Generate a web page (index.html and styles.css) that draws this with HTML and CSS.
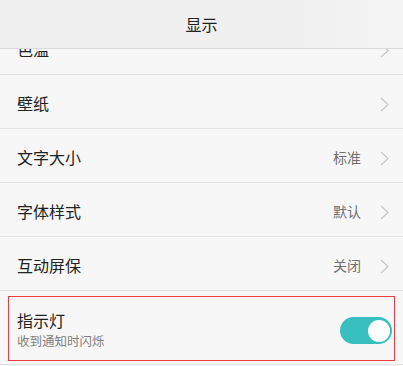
FILE: index.html
```html
<!DOCTYPE html>
<html lang="zh-CN">
<head>
  <meta charset="UTF-8">
  <meta name="viewport" content="width=device-width, initial-scale=1.0">
  <title>显示</title>
  <link rel="stylesheet" href="styles.css">
</head>
<body>

  <div class="header">显示</div>

  <div class="viewport">
    <div class="list">
      <div class="row">
        <span class="label">色温</span>
        <span class="arrow"><svg width="9" height="15" viewBox="0 0 9 15"><polyline points="1,1 8,7.5 1,14" /></svg></span>
      </div>
      <div class="row">
        <span class="label">壁纸</span>
        <span class="arrow"><svg width="9" height="15" viewBox="0 0 9 15"><polyline points="1,1 8,7.5 1,14" /></svg></span>
      </div>
      <div class="row">
        <span class="label">文字大小</span>
        <span class="value">标准</span>
        <span class="arrow"><svg width="9" height="15" viewBox="0 0 9 15"><polyline points="1,1 8,7.5 1,14" /></svg></span>
      </div>
      <div class="row">
        <span class="label">字体样式</span>
        <span class="value">默认</span>
        <span class="arrow"><svg width="9" height="15" viewBox="0 0 9 15"><polyline points="1,1 8,7.5 1,14" /></svg></span>
      </div>
      <div class="row">
        <span class="label">互动屏保</span>
        <span class="value">关闭</span>
        <span class="arrow"><svg width="9" height="15" viewBox="0 0 9 15"><polyline points="1,1 8,7.5 1,14" /></svg></span>
      </div>
      <div class="row row-marked">
        <div class="marked">
          <div class="text">
            <div class="label">指示灯</div>
            <div class="sub">收到通知时闪烁</div>
          </div>
          <div class="switch on"><div class="knob"></div></div>
        </div>
      </div>
    </div>
  </div>

</body>
</html>
```

FILE: styles.css
```css
body {
  margin: 0;
  width: 403px;
  height: 366px;
  display: flex;
  flex-direction: column;
  overflow: hidden;
  background-color: #f7f7f7;
  font-family: "Noto Sans CJK SC", "Noto Sans", sans-serif;
  color: #222;
}
.header {
  height: 48px;
  flex-shrink: 0;
  display: flex;
  justify-content: center;
  align-items: center;
  font-size: 16px;
  color: #222;
  background: linear-gradient(90deg, #efefef, #f0f0f0 70%, #f3f3f3);
  border-bottom: 1px solid #d9d9d9;
}
.viewport {
  flex: 1;
  overflow: hidden;
}
.list {
  margin-top: -28px;
}
.row {
  height: 53px;
  display: flex;
  align-items: center;
  padding: 0 14px 0 17px;
  border-bottom: 1px solid #e3e3e3;
}
.label {
  flex: 1;
  font-size: 16px;
  color: #222;
  padding-top: 3px;
}
.value {
  font-size: 14px;
  color: #707070;
  margin-right: 19px;
  padding-top: 3px;
}
.arrow {
  display: flex;
  padding-top: 5px;
}
.arrow polyline {
  fill: none;
  stroke: #c6c6c6;
  stroke-width: 1.2;
}
.row-marked {
  height: auto;
  padding: 5px 8px 3px 8px;
}
.marked {
  flex: 1;
  height: 63px;
  display: flex;
  align-items: center;
  border: 1px solid #ee3a3a;
  padding: 0 2px 0 8px;
}
.text {
  flex: 1;
  padding-top: 2px;
}
.text .label {
  padding-top: 0;
  line-height: 22px;
}
.sub {
  font-size: 12.5px;
  color: #808080;
  line-height: 20px;
}
.switch {
  width: 52px;
  height: 27px;
  border-radius: 14px;
  background-color: #d0d0d0;
  display: flex;
  align-items: center;
  padding: 0 2px;
  box-sizing: border-box;
  margin-top: 4px;
}
.switch.on {
  background-color: #38bfc0;
  justify-content: flex-end;
}
.knob {
  width: 22px;
  height: 22px;
  border-radius: 50%;
  background-color: #fff;
}
```
